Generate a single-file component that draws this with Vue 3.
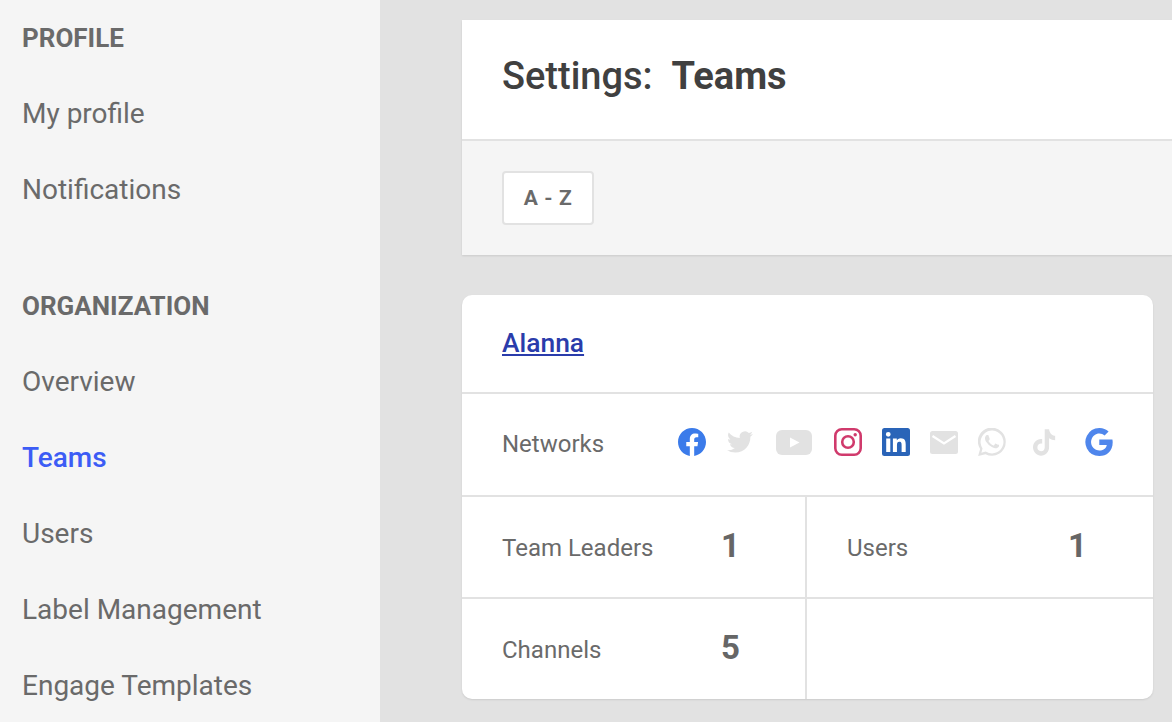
<script setup>
const profile = ['My profile', 'Notifications']
const org = ['Overview', 'Teams', 'Users', 'Label Management', 'Engage Templates']
</script>

<template>
  <div class="page">
    <aside class="side">
      <h3 class="head">PROFILE</h3>
      <a v-for="p in profile" :key="p" class="item">{{ p }}</a>
      <h3 class="head second">ORGANIZATION</h3>
      <a v-for="o in org" :key="o" class="item" :class="{ active: o === 'Teams' }">{{ o }}</a>
    </aside>
    <main class="main">
      <section class="top">
        <div class="title"><h1>Settings:&nbsp; <b>Teams</b></h1></div>
        <div class="tools"><button class="sort">A - Z</button></div>
      </section>
      <section class="card">
        <div class="name"><a href="#" @click.prevent>Alanna</a></div>
        <div class="nets">
          <span class="lab">Networks</span>
          <div class="icons">
            <svg viewBox="0 0 24 24" width="28" height="28"><path fill="#3b7bea" d="M24 12.070C24 5.400 18.630 0 12 0S0 5.400 0 12.070c0 6.030 4.390 11.020 10.130 11.930v-8.440H7.080v-3.490h3.050V9.410c0-3.020 1.790-4.690 4.530-4.690 1.310 0 2.690.24 2.690.24v2.970h-1.510c-1.490 0-1.960.93-1.960 1.890v2.250h3.330l-.53 3.490h-2.800V24C19.610 23.090 24 18.100 24 12.070z"/></svg>
            <svg class="tw" viewBox="0 0 24 24" width="26" height="26"><path fill="#e2e2e2" d="M23.950 4.570a10 10 0 0 1-2.820.77 4.960 4.960 0 0 0 2.160-2.720c-.95.55-2 .95-3.120 1.180a4.920 4.920 0 0 0-8.380 4.480C7.690 8.100 4.070 6.130 1.640 3.160a4.820 4.820 0 0 0-.67 2.480c0 1.710.87 3.210 2.190 4.100a4.900 4.900 0 0 1-2.230-.62v.06a4.920 4.920 0 0 0 3.950 4.830 5 5 0 0 1-2.210.08 4.940 4.940 0 0 0 4.600 3.420A9.870 9.870 0 0 1 0 19.540a14 14 0 0 0 7.560 2.210c9.050 0 14-7.500 14-13.980 0-.21 0-.42-.02-.63a9.940 9.940 0 0 0 2.410-2.570z"/></svg>
            <svg class="yt" viewBox="0 0 36 25" width="36" height="25"><rect width="36" height="25" rx="6" fill="#e2e2e2"/><path fill="#fff" d="M14 7.500v10l9.500-5z"/></svg>
            <svg viewBox="0 0 28 28" width="28" height="28"><rect x="1.300" y="1.300" width="25.400" height="25.400" rx="6.500" fill="none" stroke="#d03a6c" stroke-width="2.600"/><circle cx="14" cy="14" r="5.800" fill="none" stroke="#d03a6c" stroke-width="2.600"/><circle cx="21.200" cy="6.800" r="1.700" fill="#d03a6c"/></svg>
            <svg viewBox="0 0 28 28" width="28" height="28"><rect width="28" height="28" rx="2.500" fill="#2a64b8"/><path fill="#fff" d="M4.200 10.500h4.100V24H4.200zM6.250 3.900a2.400 2.400 0 1 1 0 4.800 2.400 2.400 0 0 1 0-4.800zM10.900 10.500h3.900v1.850h.06c.55-1.030 1.900-2.150 3.900-2.150 4.150 0 4.950 2.750 4.950 6.300V24h-4.100v-6.600c0-1.600 0-3.600-2.200-3.600s-2.450 1.700-2.450 3.450V24h-4.060z"/></svg>
            <svg viewBox="0 0 28 23" width="28" height="23"><rect width="28" height="23" rx="2.500" fill="#e2e2e2"/><path fill="none" stroke="#fff" stroke-width="2.200" d="M2.500 5l11.500 7.500L25.500 5"/></svg>
            <svg viewBox="0 0 24 24" width="28" height="28"><path fill="#e2e2e2" d="M20.400 3.500A11.800 11.800 0 0 0 1.800 17.900L.1 24l6.300-1.600A11.800 11.800 0 0 0 23.800 12a11.700 11.700 0 0 0-3.400-8.500zM12 21.800a9.800 9.800 0 0 1-5-1.400l-.4-.2-3.700 1 1-3.600-.2-.4A9.800 9.800 0 1 1 12 21.800zm5.400-7.400c-.3-.1-1.800-.9-2-1-.3-.1-.5-.1-.7.2l-.9 1.200c-.2.2-.4.2-.6.1-.3-.2-1.300-.5-2.400-1.500-.9-.8-1.500-1.800-1.700-2.100-.2-.3 0-.5.1-.6l.5-.5.3-.5c.1-.2 0-.4 0-.5L9 6.500c-.2-.5-.4-.4-.6-.4h-.6c-.2 0-.5.1-.8.4-.3.3-1 1-1 2.500s1.100 2.900 1.200 3.100c.2.200 2.100 3.200 5.100 4.500.7.300 1.300.500 1.700.600.700.200 1.400.200 1.900.100.600-.100 1.800-.700 2-1.400.200-.700.200-1.300.200-1.400-.100-.100-.300-.200-.700-.400z"/></svg>
            <svg class="tt" viewBox="4.100 2.800 17 18.400" width="24" height="27" preserveAspectRatio="none"><path fill="#e2e2e2" d="M16.600 5.800A4.300 4.300 0 0 1 15.500 3h-3.100v12.400a2.600 2.600 0 0 1-2.600 2.500 2.600 2.600 0 0 1-2.600-2.600c0-1.700 1.700-3 3.400-2.500V9.700c-3.500-.5-6.500 2.200-6.500 5.600 0 3.300 2.800 5.700 5.700 5.700 3.100 0 5.700-2.600 5.700-5.700V9.100a7.400 7.400 0 0 0 4.300 1.400V7.400s-1.900.100-3.200-1.600z"/></svg>
            <svg viewBox="0 0 28 28" width="28" height="28"><path fill="#4f86ec" d="M27.700 14.300c0-1-.1-2-.3-2.900H14.300v5.500h7.500c-.3 1.800-1.300 3.300-2.800 4.300v3.600h4.500c2.700-2.500 4.200-6.100 4.200-10.500zM14.300 28c3.800 0 6.900-1.200 9.200-3.300l-4.500-3.500c-1.200.8-2.800 1.300-4.700 1.300-3.600 0-6.700-2.400-7.800-5.700H1.900V20.400A14 14 0 0 0 14.300 28zM6.500 16.800a8.400 8.400 0 0 1 0-5.400V7.800H1.900a14 14 0 0 0 0 12.600zM14.300 5.500c2 0 3.900.7 5.300 2.100l4-4A13.400 13.400 0 0 0 14.300 0 14 14 0 0 0 1.900 7.800l4.600 3.600c1.100-3.400 4.200-5.900 7.800-5.900z"/></svg>
          </div>
        </div>
        <div class="stats">
          <div class="stat left"><span class="lab">Team Leaders</span><b>1</b></div>
          <div class="stat right"><span class="lab">Users</span><b>1</b></div>
          <div class="stat left low"><span class="lab">Channels</span><b>5</b></div>
          <div class="stat right low"></div>
        </div>
      </section>
    </main>
  </div>
</template>

<style>
html, body { margin: 0; height: 100%; overflow: hidden; background: #e2e2e2; }
</style>

<style scoped>
.page { display: flex; width: 1172px; height: 722px; overflow: hidden; font-family: Roboto, sans-serif; color: #6a6a6a; }
.side { width: 380px; flex: none; background: #f5f5f5; padding-left: 22px; box-sizing: border-box; }
.head { margin: 0; height: 75px; display: flex; align-items: center; font-size: 26px; font-weight: 700; }
.second { margin-top: 41px; }
.item { display: flex; align-items: center; height: 76px; font-size: 28px; }
.item.active { color: #3c5cf5; font-weight: 500; }
.main { flex: 1; padding: 20px 0 0 82px; min-width: 0; }
.top { box-shadow: 0 1px 2px rgba(0,0,0,.1); }
.title { background: #fff; border-bottom: 2px solid #e2e2e2; display: flex; align-items: center; padding: 0 0 8px 40px; height: 111px; }
h1 { margin: 0; font-size: 38px; font-weight: 500; color: #404040; }
h1 b { font-weight: 700; }
.tools { height: 114px; background: #f5f5f5; padding: 30px 0 0 40px; box-sizing: border-box; }
.sort { width: 92px; height: 54px; background: #fff; border: 2px solid #e2e2e2; border-radius: 4px; font: 700 21px Roboto, sans-serif; color: #6a6a6a; letter-spacing: .6px; padding: 0; }
.card { margin-top: 40px; width: 691px; background: #fff; border-radius: 10px; box-shadow: 0 1px 2px rgba(0,0,0,.1); overflow: hidden; }
.name { height: 95px; border-bottom: 2px solid #e2e2e2; display: flex; align-items: center; padding: 0 0 2px 40px; }
.name a { font-size: 26.400px; font-weight: 500; color: #2a3cab; }
.nets { height: 101px; border-bottom: 2px solid #e2e2e2; display: flex; align-items: center; padding: 0 40px; }
.lab { font-size: 24px; color: #6a6a6a; }
.nets .lab { width: 176px; flex: none; margin-bottom: 2px; }
.icons { display: flex; align-items: center; gap: 20px; flex: 1; margin-bottom: 5px; }
.tw { margin: 0 1px; }
.yt { margin: 0 2px; }
.tt { margin: 0 8px 0 7px; }
.stats { display: grid; grid-template-columns: 343px 1fr; }
.stat { height: 100px; display: flex; align-items: center; position: relative; padding: 2px 0 0 40px; box-sizing: border-box; }
.stat.left { border-right: 2px solid #e2e2e2; width: 345px; }
.stat.right { margin-left: 2px; }
.stat b { position: absolute; font-size: 33px; font-weight: 700; color: #666; top: 29px; }
.stat.left b { left: 259px; }
.stat.right b { left: 261px; }
.stat.low { border-top: 2px solid #e2e2e2; height: 102px; }
</style>
